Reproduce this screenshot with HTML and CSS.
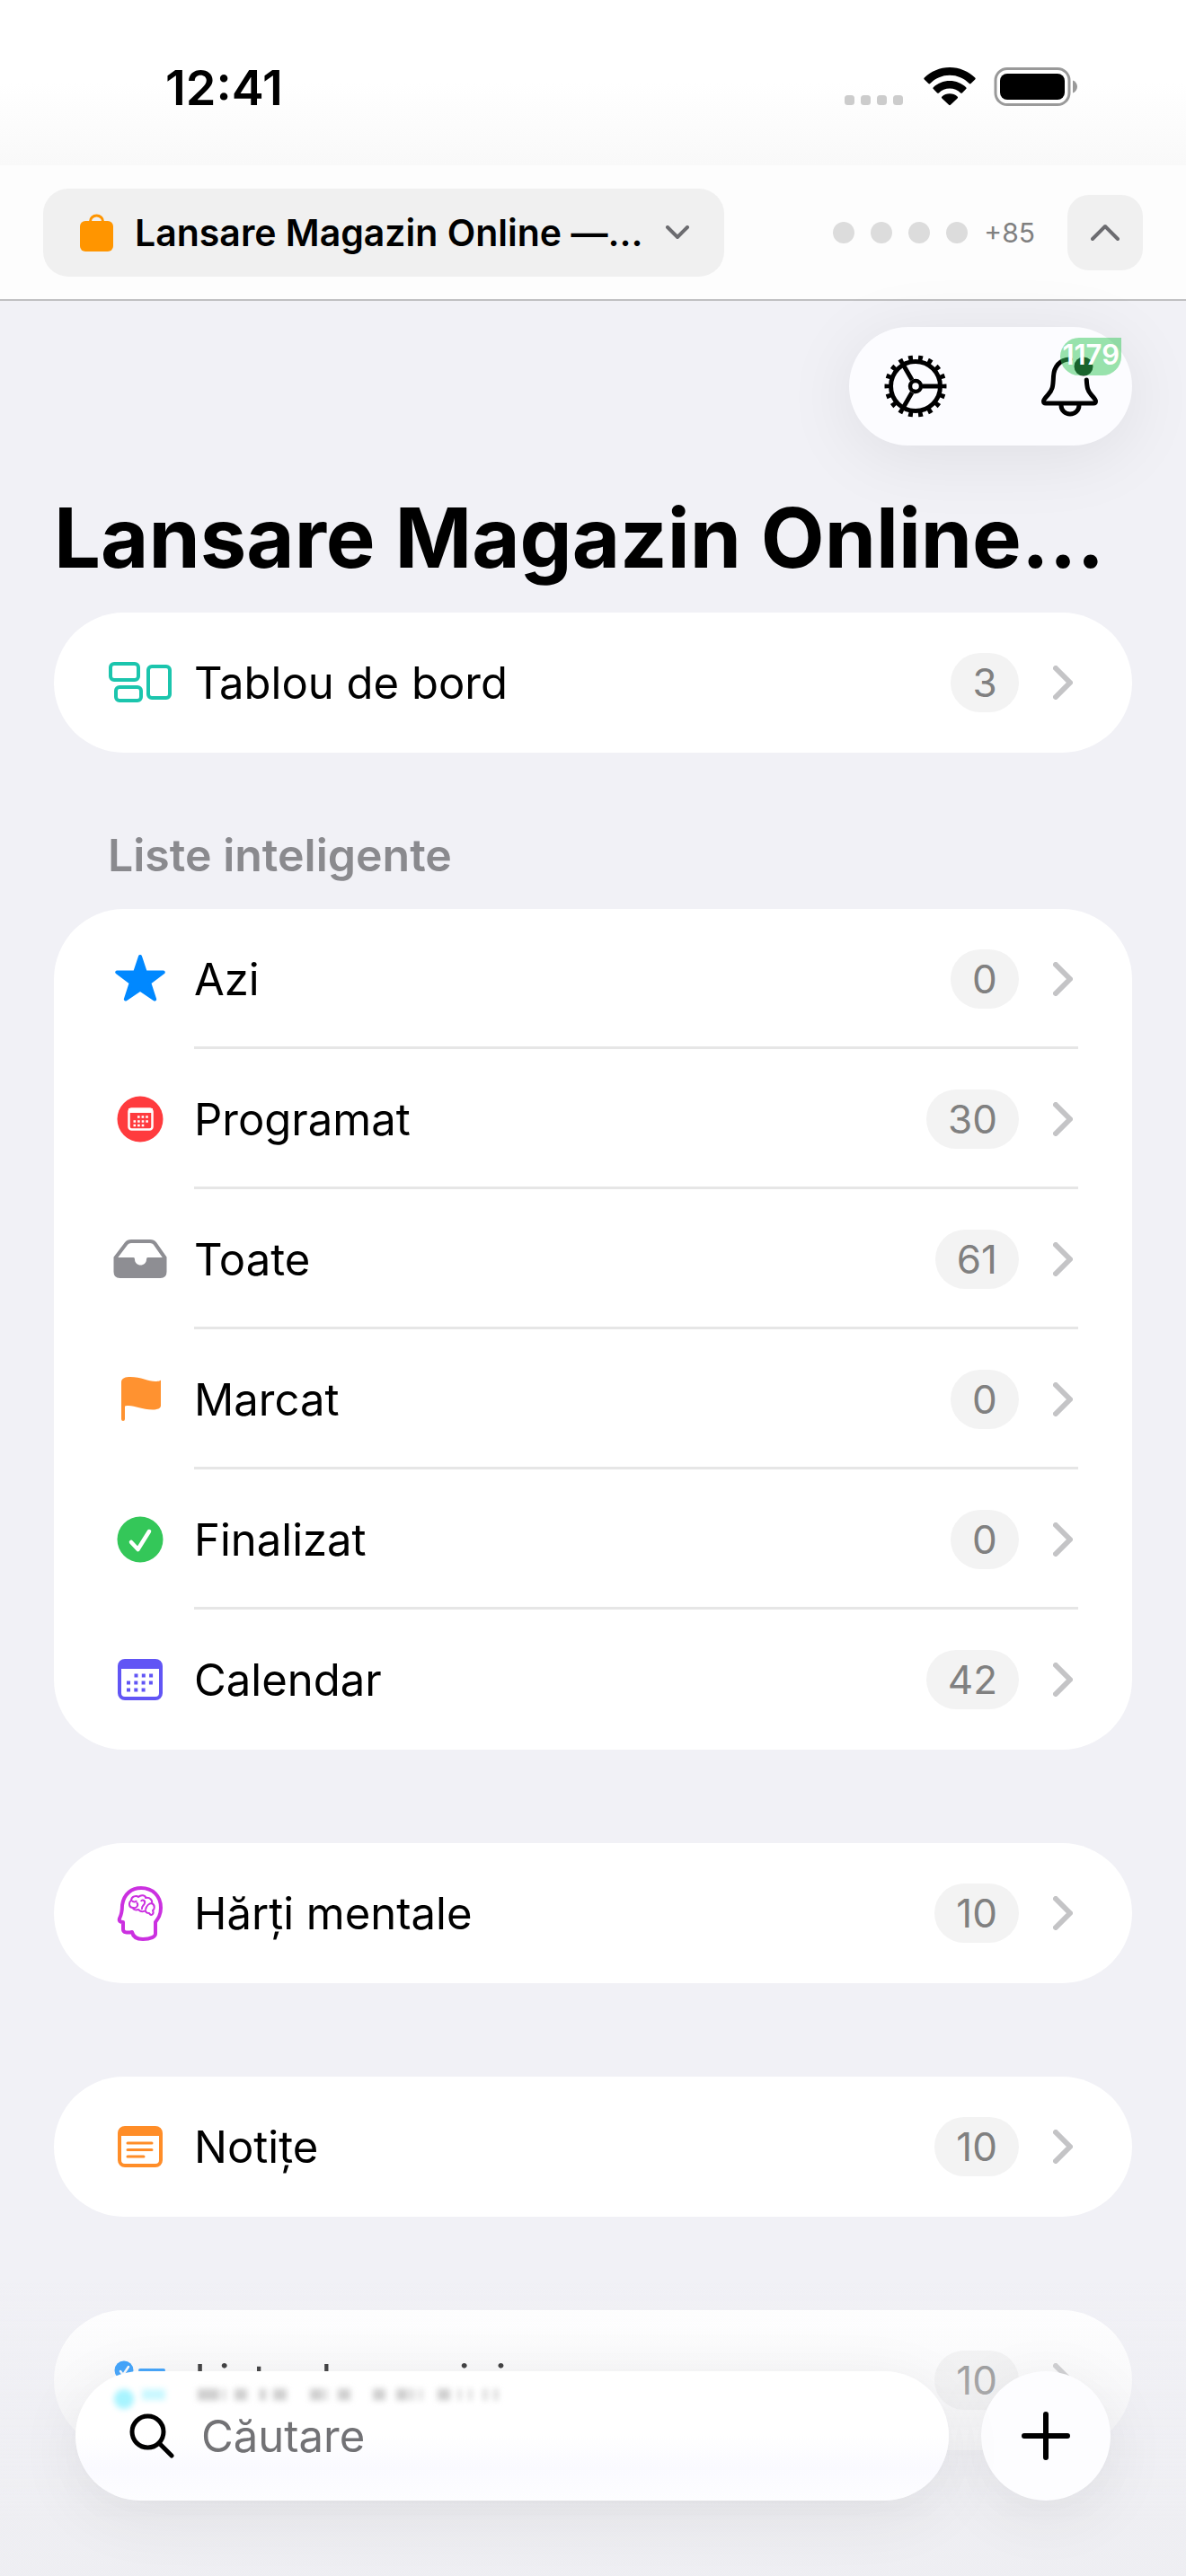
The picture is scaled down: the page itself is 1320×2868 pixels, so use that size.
FILE: index.html
```html
<!DOCTYPE html>
<html lang="ro">
	<head>
		<title>Lansare Magazin Online</title>
		<meta charset="UTF-8">
		<meta name="viewport" content="width=device-width">

		<link rel="stylesheet" href="styles.css">
	</head>
	<body>
		<header class="topBar">
			<div class="statusBar">
				<span class="time">12:41</span>
				<div class="statusIcons">
					<svg class="signal" width="68" height="44" viewBox="0 0 68 44" fill="#ccc">
						<rect x="0" y="31" width="11" height="11" rx="3.500"/>
						<rect x="18" y="31" width="11" height="11" rx="3.500"/>
						<rect x="36" y="31" width="11" height="11" rx="3.500"/>
						<rect x="54" y="31" width="11" height="11" rx="3.500"/>
					</svg>
					<svg class="wifi" width="58" height="44" viewBox="0 0 58 44">
						<path d="M29 0C18 0 8 4.500 .8 11.600a1.200 1.200 0 0 0 0 1.800l4.600 4.600a1.300 1.300 0 0 0 1.800 0C13 12.200 20.600 8.800 29 8.800s16 3.400 21.800 9.200a1.300 1.300 0 0 0 1.800 0l4.600-4.600a1.200 1.200 0 0 0 0-1.800C50 4.500 40 0 29 0z"/>
						<path d="M29 15c-7 0-13.400 2.700-18.200 7.200a1.300 1.300 0 0 0 0 1.900l4.300 4.300a1.300 1.300 0 0 0 1.800 0C20.200 25.300 24.300 23.500 29 23.500s8.800 1.800 12.100 4.900a1.300 1.300 0 0 0 1.800 0l4.300-4.300a1.300 1.300 0 0 0 0-1.900C42.400 17.700 36 15 29 15z"/>
						<path d="M29 29.300c-3.300 0-6.300 1.200-8.600 3.200a1.300 1.300 0 0 0 0 1.900l7.700 7.400a1.300 1.300 0 0 0 1.800 0l7.700-7.400a1.300 1.300 0 0 0 0-1.900c-2.300-2-5.300-3.200-8.600-3.200z"/>
					</svg>
					<svg class="battery" width="94" height="44" viewBox="0 0 94 44">
						<rect x="2" y="1.500" width="82" height="40" rx="13" fill="none" stroke="#999" stroke-width="3"/>
						<rect x="7" y="7" width="72" height="29" rx="8"/>
						<path d="M88 14.500c3 1 5 4 5 7s-2 6-5 7z" fill="#999"/>
					</svg>
				</div>
			</div>
			<nav class="projectBar">
				<button class="projectButton" type="button">
					<svg width="38" height="42" viewBox="0 0 38 42">
						<rect x="1" y="8" width="37" height="34" rx="6" fill="#ff9500"/>
						<path d="M12.500 9V8.500a7 6.500 0 0 1 14 0V9" fill="none" stroke="#ff9500" stroke-width="3"/>
					</svg>
					<span class="projectName">Lansare Magazin Online —...</span>
					<svg width="28" height="16" viewBox="0 0 28 16" fill="none" stroke="#6c6c70" stroke-width="4" stroke-linecap="round" stroke-linejoin="round">
						<path d="M3 2l11 11L25 2"/>
					</svg>
				</button>
				<div class="pages">
					<span class="dot"></span>
					<span class="dot"></span>
					<span class="dot"></span>
					<span class="dot"></span>
					<span class="more">+85</span>
				</div>
				<button class="collapse" type="button" aria-label="Restrânge">
					<svg width="32" height="20" viewBox="0 0 32 20" fill="none" stroke="#6c6c70" stroke-width="4" stroke-linecap="round" stroke-linejoin="round">
						<path d="M2 17L16 3l14 14"/>
					</svg>
				</button>
			</nav>
		</header>

		<main class="content">
			<div class="tools">
				<button class="tool" type="button" aria-label="Setări">
					<svg width="72" height="72" viewBox="-36 -36 72 72" fill="none" stroke="#000">
						<circle r="27.500" stroke-width="5"/>
						<circle r="31" stroke-width="7" stroke-dasharray="4.800 6.021" stroke-dashoffset="2.400" pathLength="194.780"/>
						<circle r="6" stroke-width="4.500"/>
						<path d="M8 0h19M-4 -7l-9.500 -16.500M-4 7l-9.500 16.500" stroke-width="5"/>
					</svg>
				</button>
				<button class="tool bell" type="button" aria-label="Notificări">
					<svg width="72" height="72" viewBox="0 0 72 72" fill="none" stroke="#000" stroke-width="5" stroke-linecap="round" stroke-linejoin="round">
						<path d="M37 6c-12 0-18 9-18.500 19-.5 12-1 15-6 20.500-3 3.300-5 5.500-5 7 0 1.700 1 2.500 2.500 2.500h53c1.500 0 2.500-.8 2.500-2.500 0-1.500-2-3.700-5-7-4-4.500-4.700-8-5.200-16.500"/>
						<path d="M27 57c0 6 4.500 10 10 10s10-4 10-10"/>
						<circle cx="52" cy="14" r="10.500" fill="#000" stroke="none"/>
					</svg>
					<span class="badge">1179</span>
				</button>
			</div>

			<h1>Lansare Magazin Online…</h1>

			<section class="card">
				<a class="row" href="#tablou">
					<svg class="icon" width="72" height="66" viewBox="0 0 72 66" fill="none" stroke="#1bc5ad" stroke-width="4">
						<rect x="3" y="12" width="31" height="18" rx="4"/>
						<rect x="9" y="38" width="28" height="15" rx="4"/>
						<rect x="45" y="15" width="24" height="35" rx="4"/>
					</svg>
					<span class="label">Tablou de bord</span>
					<span class="count">3</span>
					<svg class="arrow" width="22" height="38" viewBox="0 0 22 38"><path d="M3 3l16 16L3 35"/></svg>
				</a>
			</section>

			<h2>Liste inteligente</h2>
			<section class="card smart">
				<a class="row" href="#azi">
					<svg class="icon" width="72" height="66" viewBox="0 0 72 66" fill="#0088ff" stroke="#0088ff" stroke-width="4" stroke-linejoin="round">
						<path d="M36 8l5.800 17.400h20L46.200 37.200l6 18.300L36 44.600 19.800 55.500l6-18.300L10.200 25.400h20z"/>
					</svg>
					<span class="label">Azi</span>
					<span class="count">0</span>
					<svg class="arrow" width="22" height="38" viewBox="0 0 22 38"><path d="M3 3l16 16L3 35"/></svg>
				</a>
				<a class="row" href="#programat">
					<svg class="icon" width="72" height="66" viewBox="0 0 72 66">
						<circle cx="36" cy="33" r="25.500" fill="#ff3b3e"/>
						<rect x="23.500" y="21.500" width="26" height="23" rx="3" fill="none" stroke="#fff" stroke-width="2.500"/>
						<path d="M23 21h27v5H23z" fill="#fff"/>
						<path d="M33 30.500h12M28.500 35.500h17M28.500 40h12" stroke="#fff" stroke-width="2.600" stroke-dasharray="2.600 2"/>
					</svg>
					<span class="label">Programat</span>
					<span class="count">30</span>
					<svg class="arrow" width="22" height="38" viewBox="0 0 22 38"><path d="M3 3l16 16L3 35"/></svg>
				</a>
				<a class="row" href="#toate">
					<svg class="icon" width="72" height="66" viewBox="0 0 72 66" fill="#8e8e93">
						<path d="M8 32L20.500 15.500Q22.500 13 26 13h21q3.500 0 5.500 2.500L64 32" fill="none" stroke="#8e8e93" stroke-width="4"/>
						<path d="M6.500 31H28.500q1.500 0 1.500 2c0 4 3 6.500 6.500 6.500S43 37 43 33q0-2 1.500-2h21V47q0 7-7 7h-45q-7 0-7-7z"/>
					</svg>
					<span class="label">Toate</span>
					<span class="count">61</span>
					<svg class="arrow" width="22" height="38" viewBox="0 0 22 38"><path d="M3 3l16 16L3 35"/></svg>
				</a>
				<a class="row" href="#marcat">
					<svg class="icon" width="72" height="66" viewBox="0 0 72 66" fill="#ff9230">
						<path d="M15 14c0-5 5-6 10-6 12 0 20 5 28 5 5 0 6-2 6-1v28c0 3-4 4.500-9 4.500-12 0-19-4.500-27-4.500-2.500 0-4 .5-4 .5V55a2 2 0 0 1-4 0z"/>
					</svg>
					<span class="label">Marcat</span>
					<span class="count">0</span>
					<svg class="arrow" width="22" height="38" viewBox="0 0 22 38"><path d="M3 3l16 16L3 35"/></svg>
				</a>
				<a class="row" href="#finalizat">
					<svg class="icon" width="72" height="66" viewBox="0 0 72 66">
						<circle cx="36" cy="33" r="25.500" fill="#34c759"/>
						<path d="M26 36l7.500 8L46 24" fill="none" stroke="#fff" stroke-width="4.500" stroke-linecap="round" stroke-linejoin="round"/>
					</svg>
					<span class="label">Finalizat</span>
					<span class="count">0</span>
					<svg class="arrow" width="22" height="38" viewBox="0 0 22 38"><path d="M3 3l16 16L3 35"/></svg>
				</a>
				<a class="row" href="#calendar">
					<svg class="icon" width="72" height="66" viewBox="0 0 72 66">
						<rect x="13" y="12" width="46" height="42" rx="6" fill="none" stroke="#6155f5" stroke-width="4"/>
						<path d="M12 21v-4q0-6 6-6h36q6 0 6 6v4z" fill="#6155f5"/>
						<path d="M29.500 28.500h21M21 36.500h29.500M21 44.500h21" stroke="#6155f5" stroke-width="4" stroke-dasharray="4 4.300"/>
					</svg>
					<span class="label">Calendar</span>
					<span class="count">42</span>
					<svg class="arrow" width="22" height="38" viewBox="0 0 22 38"><path d="M3 3l16 16L3 35"/></svg>
				</a>
			</section>

			<section class="card">
				<a class="row" href="#harti">
					<svg class="icon" width="72" height="66" viewBox="0 0 72 66" fill="none" stroke="#cb30e0" stroke-width="4" stroke-linejoin="round">
						<path d="M16 24C18 11 27 5 37 5c13 0 22 9 22 22 0 8-3 12-6 16v13c0 3-5 6-14 6-7 0-11-3-12-8-5 1-10 1-10-3v-8c-3 0-5-1-4-4 2-4 3-9 3-15z"/>
						<path d="M28 27c-5 0-5-6-2-8 0-5 6-6 8-4 3-3 8-2 8 1 5-1 8 3 7 6 4 2 3 7 1 8 2 4-2 7-4 3-3 0-4-1-4-3-3 2-6 1-8-1-3 1-6 0-6-2zM27 19c1 2 4 2 5 0M28 27c4 1 7-3 4-6M37 20c1-3 5-1 4 2s-4 3-3 7M49 22c-3 0-6 3-7 7" stroke-width="2"/>
					</svg>
					<span class="label">Hărți mentale</span>
					<span class="count">10</span>
					<svg class="arrow" width="22" height="38" viewBox="0 0 22 38"><path d="M3 3l16 16L3 35"/></svg>
				</a>
			</section>

			<section class="card">
				<a class="row" href="#notite">
					<svg class="icon" width="72" height="66" viewBox="0 0 72 66">
						<rect x="13" y="12" width="46" height="42" rx="6" fill="none" stroke="#ff8d28" stroke-width="4"/>
						<path d="M12 21v-4q0-6 6-6h36q6 0 6 6v4z" fill="#ff8d28"/>
						<path d="M22 29h27M22 36.500h27M22 44h18" stroke="#ff8d28" stroke-width="3" stroke-linecap="round"/>
					</svg>
					<span class="label">Notițe</span>
					<span class="count">10</span>
					<svg class="arrow" width="22" height="38" viewBox="0 0 22 38"><path d="M3 3l16 16L3 35"/></svg>
				</a>
			</section>

			<section class="card">
				<a class="row" href="#sarcini">
					<svg class="icon" width="72" height="66" viewBox="0 0 72 66">
						<circle cx="18" cy="22" r="10.500" fill="#0088ff"/>
						<circle cx="18" cy="46" r="9" fill="none" stroke="#0088ff" stroke-width="3"/>
						<path d="M14 23l3 4 6-9" fill="none" stroke="#fff" stroke-width="2.500" stroke-linecap="round"/>
						<path d="M36 22h26M36 46h26" stroke="#0088ff" stroke-width="4" stroke-linecap="round"/>
					</svg>
					<span class="label">Liste de sarcini</span>
					<span class="count">10</span>
					<svg class="arrow" width="22" height="38" viewBox="0 0 22 38"><path d="M3 3l16 16L3 35"/></svg>
				</a>
			</section>
		</main>

		<footer class="bottomBar">
			<div class="search">
				<!-- soft reflection of the row behind the glass -->
				<svg class="reflection" width="450" height="44" viewBox="0 0 450 44">
					<circle cx="14" cy="21" r="11" fill="#a8f4ff"/>
					<path d="M34 16h26" stroke="#c9f8ff" stroke-width="12"/>
					<path d="M96 16h24m4 0h3m10 0h14m14 0h7m8 0h15m26 0h14m2 0h3m12 0h14m25 0h14m12 0h13m3 0h4m6 0h3m17 0h14m9 0h3m9 0h3m13 0h4m8 0h4" stroke="#cfcfcf" stroke-width="13"/>
				</svg>
				<label class="searchLabel" for="cautare" title="Căutare">
					<svg width="50" height="50" viewBox="0 0 50 50" fill="none" stroke="#000" stroke-width="5" stroke-linecap="round">
						<circle cx="20.500" cy="20.500" r="17.500"/>
						<path d="M33.500 33.500L47 47"/>
					</svg>
				</label>
				<input class="searchField" id="cautare" type="search" placeholder="Căutare">
			</div>
			<button class="add" type="button" aria-label="Adaugă">
				<svg width="54" height="54" viewBox="0 0 54 54" stroke="#000" stroke-width="6" stroke-linecap="round">
					<path d="M27 3v48M3 27h48"/>
				</svg>
			</button>
		</footer>
	</body>
</html>
```
FILE: styles.css
```css
* {
	box-sizing : border-box;
}
body {
	margin : 0;
	min-height : 100vh;
	font-family : Inter, "Liberation Sans", sans-serif;
	font-size : 49px;
	color : #000;
	background-color : #f1f1f6;
}
button {
	margin : 0;
	padding : 0;
	border : none;
	font-family : inherit;
	color : inherit;
	background : none;
	cursor : pointer;
}
svg {
	display : block;
	flex : none;
}
h1, h2 {
	margin : 0;
}

.topBar {
	background-color : #fdfdfd;
	border-bottom : 2px solid #c0c0c2;
}
.statusBar {
	display : flex;
	align-items : center;
	justify-content : space-between;
	height : 184px;
	padding : 10px 120px 0 184px;
	background : linear-gradient(#fff 50%, #f9f9f9);
}
.time {
	font-size : 54px;
	font-weight : 600;
}
.statusIcons {
	display : flex;
	gap : 20px;
}
.projectBar {
	display : flex;
	align-items : center;
	height : 149px;
	padding : 0 48px;
}
.projectButton {
	display : flex;
	align-items : center;
	gap : 24px;
	height : 98px;
	padding : 0 38px 0 40px;
	border-radius : 28px;
	background-color : #f0f0f0;
}
.projectName {
	font-size : 41px;
	font-weight : 600;
	white-space : nowrap;
}
.pages {
	display : flex;
	align-items : center;
	gap : 18px;
	margin-left : auto;
}
.dot {
	width : 24px;
	height : 24px;
	border-radius : 50%;
	background-color : #dcdcdc;
}
.more {
	font-size : 30px;
	color : #808080;
}
.collapse {
	display : grid;
	place-items : center;
	width : 84px;
	height : 84px;
	margin-left : 36px;
	border-radius : 24px;
	background-color : #f0f0f0;
}

.content {
	padding : 29px 60px 140px;
}
.tools {
	display : flex;
	justify-content : space-between;
	width : 315px;
	height : 132px;
	margin-left : auto;
	padding : 0 34px 0 38px;
	border-radius : 66px;
	background-color : #fcfcff;
	box-shadow : 0 12px 80px rgba(0, 0, 0, 0.08);
}
.tool {
	display : grid;
	place-items : center;
	width : 72px;
}
.bell {
	position : relative;
}
.badge {
	position : absolute;
	top : 12px;
	right : -22px;
	height : 42px;
	padding : 0 2px;
	border-radius : 21px 0 21px 21px;
	font-size : 31px;
	font-weight : 600;
	line-height : 38px;
	color : #fff;
	background-color : rgba(52, 199, 89, 0.5);
}
h1 {
	padding : 42px 0 22px;
	font-size : 92px;
	font-weight : 700;
	line-height : 122px;
	white-space : nowrap;
}
h2 {
	padding : 0 60px;
	margin : -20px 0 30px;
	font-size : 50px;
	font-weight : 600;
	line-height : 60px;
	color : #8a8a8e;
}
.card {
	margin-bottom : 104px;
	border-radius : 78px;
	background-color : #fff;
}
.row {
	position : relative;
	display : flex;
	align-items : center;
	height : 156px;
	padding : 0 66px 0 60px;
	color : #000;
	text-decoration : none;
}
/* hairline starts under the label, not under the icon */
.row + .row::before {
	content : "";
	position : absolute;
	top : -3px;
	left : 156px;
	right : 60px;
	height : 3px;
	background-color : #e6e6e6;
}
.label {
	flex : 1;
	margin-left : 24px;
}
.count {
	min-width : 76px;
	height : 66px;
	margin-right : 38px;
	padding : 0 24px;
	border-radius : 33px;
	font-size : 44px;
	line-height : 66px;
	text-align : center;
	color : #808080;
	background-color : #f3f3f3;
}
.arrow {
	fill : none;
	stroke : #c4c4c6;
	stroke-width : 6px;
	stroke-linecap : round;
	stroke-linejoin : round;
}

.bottomBar {
	position : fixed;
	left : 0;
	right : 0;
	bottom : 0;
	display : flex;
	gap : 36px;
	padding : 100px 84px 84px;
	background : linear-gradient(rgba(238, 238, 242, 0), rgba(238, 238, 242, 0.8) 80%);
}
.search, .add {
	height : 144px;
	background-color : #fdfdff;
	box-shadow : 0 16px 70px rgba(0, 0, 0, 0.08);
}
.search {
	position : relative;
	display : flex;
	align-items : center;
	flex : 1;
	padding : 0 60px;
	border-radius : 72px;
	background : linear-gradient(#fff 50%, #fafaff 75%, #fdfdff);
}
.reflection {
	position : absolute;
	top : 10px;
	left : 40px;
	filter : blur(3px);
}
.searchField {
	flex : 1;
	min-width : 0;
	margin-left : 30px;
	padding : 0;
	border : none;
	outline : none;
	font-family : inherit;
	font-size : 49px;
	background : none;
}
.searchField::placeholder {
	color : #727275;
	opacity : 1;
}
.add {
	display : grid;
	place-items : center;
	width : 144px;
	border-radius : 50%;
}
```
